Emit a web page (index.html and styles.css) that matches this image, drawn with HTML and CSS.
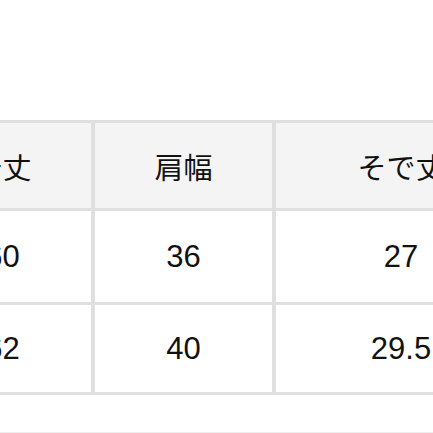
FILE: index.html
```html
<!DOCTYPE html>
<html lang="ja">
<head>
<meta charset="utf-8">
<link rel="stylesheet" href="styles.css">
</head>
<body>
<div class="page">
  <div class="size-table">
    <div class="cell head">着丈</div>
    <div class="cell head">肩幅</div>
    <div class="cell head">そで丈</div>
    <div class="cell r1">60</div>
    <div class="cell r1">36</div>
    <div class="cell r1">27</div>
    <div class="cell r2">62</div>
    <div class="cell r2">40</div>
    <div class="cell r2">29.5</div>
  </div>
  <div class="divider"></div>
</div>
</body>
</html>
```
FILE: styles.css
```css
html, body {
  margin: 0;
  padding: 0;
  background: #ffffff;
}
.page {
  width: 433px;
  height: 433px;
  overflow: hidden;
  padding-top: 120px;
  box-sizing: border-box;
  font-family: "Liberation Sans", "Noto Sans CJK JP", sans-serif;
  color: #111111;
}
.size-table {
  display: grid;
  grid-template-columns: 177px 177px 250px;
  grid-template-rows: 85px 91px 87px;
  column-gap: 4px;
  row-gap: 3px;
  padding: 3px 4px;
  background: #dfdfdf;
  margin-left: -90px;
  width: max-content;
}
.cell {
  display: flex;
  align-items: center;
  justify-content: center;
  font-size: 31px;
  background: #ffffff;
}
.head {
  background: #f4f4f4;
  font-size: 29px;
}
.divider {
  margin-top: 37px;
  height: 1px;
  background: #eeeeee;
}
```
